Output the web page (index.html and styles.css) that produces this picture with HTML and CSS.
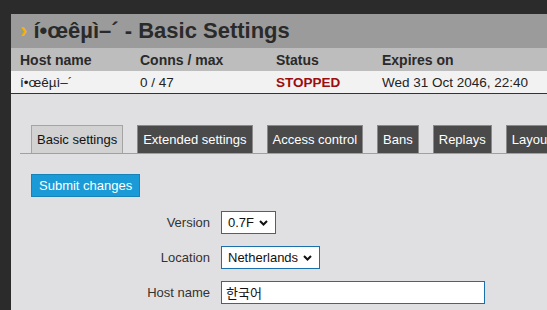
FILE: index.html
```html
<!DOCTYPE html>
<html lang="en">
<head>
    <meta charset="UTF-8">
    <title>Basic Settings</title>
    <link rel="stylesheet" href="styles.css">
</head>
<body>
    <div class="page">
        <div class="panel">
            <h1 class="title"><span class="arrow">›</span> í•œêµì–´ - Basic Settings</h1>
            <table class="host-table">
                <tr>
                    <th class="col-name">Host name</th>
                    <th class="col-conns">Conns / max</th>
                    <th class="col-status">Status</th>
                    <th>Expires on</th>
                </tr>
                <tr>
                    <td>í•œêµì–´</td>
                    <td>0 / 47</td>
                    <td class="stopped">STOPPED</td>
                    <td>Wed 31 Oct 2046, 22:40</td>
                </tr>
            </table>

            <div class="content">
                <div class="tabs">
                    <span class="tab active">Basic settings</span>
                    <span class="tab">Extended settings</span>
                    <span class="tab">Access control</span>
                    <span class="tab">Bans</span>
                    <span class="tab">Replays</span>
                    <span class="tab">Layout</span>
                </div>

                <button class="submit">Submit changes</button>

                <div class="form">
                    <label>Version</label>
                    <div class="select">
                        <select><option>0.7F</option></select>
                        <svg width="9" height="6" viewBox="0 0 9 6"><path d="M1 1l3.5 3.5L8 1" fill="none" stroke="#111" stroke-width="2"/></svg>
                    </div>

                    <label>Location</label>
                    <div class="select">
                        <select><option>Netherlands</option></select>
                        <svg width="9" height="6" viewBox="0 0 9 6"><path d="M1 1l3.5 3.5L8 1" fill="none" stroke="#111" stroke-width="2"/></svg>
                    </div>

                    <label>Host name</label>
                    <input type="text" class="text-input" value="한국어">
                </div>
            </div>
        </div>
    </div>
</body>
</html>
```

FILE: styles.css
```css
body {
    margin: 0;
    background-color: #2b2b2b;
    font-family: "Liberation Sans", Arial, "Noto Sans CJK KR", sans-serif;
    overflow: hidden;
}

.page {
    padding: 14px 0 0 11px;
}

.panel {
    background: #e0e0e2;
    height: 296px;
    width: 560px;
    overflow: hidden;
}

.title {
    margin: 0;
    height: 34px;
    line-height: 34px;
    padding-left: 9px;
    background: #9b9b9b;
    color: #2a2a2a;
    font-size: 22px;
    font-weight: bold;
    white-space: nowrap;
}

.title .arrow {
    color: #f2b300;
}

.host-table {
    width: 100%;
    border-collapse: collapse;
    font-size: 14px;
}

.host-table th {
    background: #bdbdbd;
    color: #2a2a2a;
    text-align: left;
    height: 23px;
    padding: 0 9px;
}

.host-table td {
    background: #f2f2f2;
    color: #222;
    height: 22px;
    padding: 0 9px;
    font-size: 13.5px;
    border-bottom: 1px solid #333;
}

.col-name { width: 102px; }
.col-conns { width: 118px; }
.col-status { width: 88px; }

.host-table .stopped {
    color: #9c0d0d;
    font-weight: bold;
}

.content {
    padding: 31px 0 0 9px;
}

.tabs {
    display: flex;
    gap: 14px;
    padding-left: 11px;
    border-bottom: 1px solid #a0a0a0;
    white-space: nowrap;
}

.tab {
    flex-shrink: 0;
    height: 27px;
    line-height: 27px;
    padding: 0 5px;
    font-size: 13px;
    background: #4a4a4a;
    color: #fff;
    border: 1px solid #8a8a8a;
    border-bottom: none;
}

.tab.active {
    background: #d2d2d2;
    color: #111;
    border-color: #a4a4a4;
}

.submit {
    display: block;
    margin: 20px 0 0 11px;
    height: 23px;
    padding: 0 7px;
    font-family: inherit;
    font-size: 13px;
    color: #fff;
    background: #1a9ad6;
    border: 1px solid #1684b8;
}

.form {
    display: grid;
    grid-template-columns: 190px auto;
    column-gap: 11px;
    row-gap: 12px;
    margin-top: 14px;
    justify-items: start;
    align-items: center;
}

.form label {
    justify-self: end;
    font-size: 13px;
    color: #333;
}

.select {
    display: flex;
    align-items: center;
    height: 21px;
    padding: 0 7px 0 6px;
    gap: 4px;
    background: #fff;
    border: 1px solid #1a70ac;
}

.select select {
    appearance: none;
    border: none;
    background: none;
    padding: 0;
    margin: 0;
    font-family: inherit;
    font-size: 13px;
    color: #111;
}

.text-input {
    width: 254px;
    height: 21px;
    padding: 0 4px;
    margin: 0;
    border: 1px solid #1a70ac;
    font-family: "Liberation Sans", "Noto Sans CJK KR", sans-serif;
    font-size: 13px;
    color: #111;
}
```
